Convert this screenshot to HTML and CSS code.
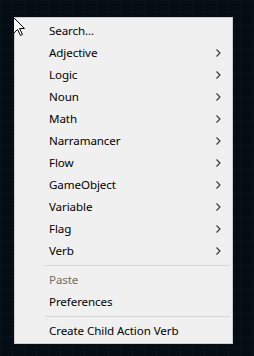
FILE: index.html
```html
<!DOCTYPE html>
<html lang="en">
<head>
  <meta charset="UTF-8">
  <title>Context menu</title>
  <link rel="stylesheet" href="styles.css">
</head>
<body>
  <div class="menu">
    <div class="item">Search...</div>
    <div class="item sub">Adjective<svg class="arrow" width="5" height="8" viewBox="0 0 5 8"><path d="M0.5 0.5 L4 4 L0.5 7.5" /></svg></div>
    <div class="item sub">Logic<svg class="arrow" width="5" height="8" viewBox="0 0 5 8"><path d="M0.5 0.5 L4 4 L0.5 7.5" /></svg></div>
    <div class="item sub">Noun<svg class="arrow" width="5" height="8" viewBox="0 0 5 8"><path d="M0.5 0.5 L4 4 L0.5 7.5" /></svg></div>
    <div class="item sub">Math<svg class="arrow" width="5" height="8" viewBox="0 0 5 8"><path d="M0.5 0.5 L4 4 L0.5 7.5" /></svg></div>
    <div class="item sub">Narramancer<svg class="arrow" width="5" height="8" viewBox="0 0 5 8"><path d="M0.5 0.5 L4 4 L0.5 7.5" /></svg></div>
    <div class="item sub">Flow<svg class="arrow" width="5" height="8" viewBox="0 0 5 8"><path d="M0.5 0.5 L4 4 L0.5 7.5" /></svg></div>
    <div class="item sub">GameObject<svg class="arrow" width="5" height="8" viewBox="0 0 5 8"><path d="M0.5 0.5 L4 4 L0.5 7.5" /></svg></div>
    <div class="item sub">Variable<svg class="arrow" width="5" height="8" viewBox="0 0 5 8"><path d="M0.5 0.5 L4 4 L0.5 7.5" /></svg></div>
    <div class="item sub">Flag<svg class="arrow" width="5" height="8" viewBox="0 0 5 8"><path d="M0.5 0.5 L4 4 L0.5 7.5" /></svg></div>
    <div class="item sub">Verb<svg class="arrow" width="5" height="8" viewBox="0 0 5 8"><path d="M0.5 0.5 L4 4 L0.5 7.5" /></svg></div>
    <div class="sep"></div>
    <div class="item disabled">Paste</div>
    <div class="item">Preferences</div>
    <div class="sep"></div>
    <div class="item">Create Child Action Verb</div>
  </div>

  <svg class="cursor" width="13" height="20" viewBox="0 0 13 20">
    <path d="M0.5 0.5 L0.5 16.5 L4.5 12.5 L7.5 18.5 L9.5 17.5 L6.5 11.5 L11.5 11.5 Z" />
  </svg>
</body>
</html>
```

FILE: styles.css
```css
body {
  margin: 0;
  height: 356px;
  background-color: #050d14;
  background-image:
    linear-gradient(to right, #08131c 1px, transparent 1px),
    linear-gradient(to bottom, #08131c 1px, transparent 1px);
  background-size: 12px 12px;
  font-family: 'Noto Sans', 'Segoe UI', sans-serif;
  font-size: 11.6px;
  letter-spacing: -0.1px;
  position: relative;
  overflow: hidden;
}

.menu {
  margin: 17px 0 0 14px;
  width: 217px;
  padding: 2px 0 1px;
  background: #f0f0f0;
  border: 1px solid #cccccc;
}

.item {
  box-sizing: border-box;
  display: flex;
  align-items: center;
  justify-content: space-between;
  height: 22px;
  padding: 0 11px 2px 34px;
  color: #000;
}

.item .arrow {
  margin-top: 2px;
}

.item.disabled {
  color: #6d6d6d;
}

.arrow path {
  fill: none;
  stroke: #333;
  stroke-width: 1.1;
}

.sep {
  height: 1px;
  background: #d7d7d7;
  margin: 3px 2px 3px 30px;
}

.cursor {
  position: absolute;
  left: 13px;
  top: 17px;
}

.cursor path {
  fill: #fff;
  stroke: #000;
  stroke-width: 1;
}
```
